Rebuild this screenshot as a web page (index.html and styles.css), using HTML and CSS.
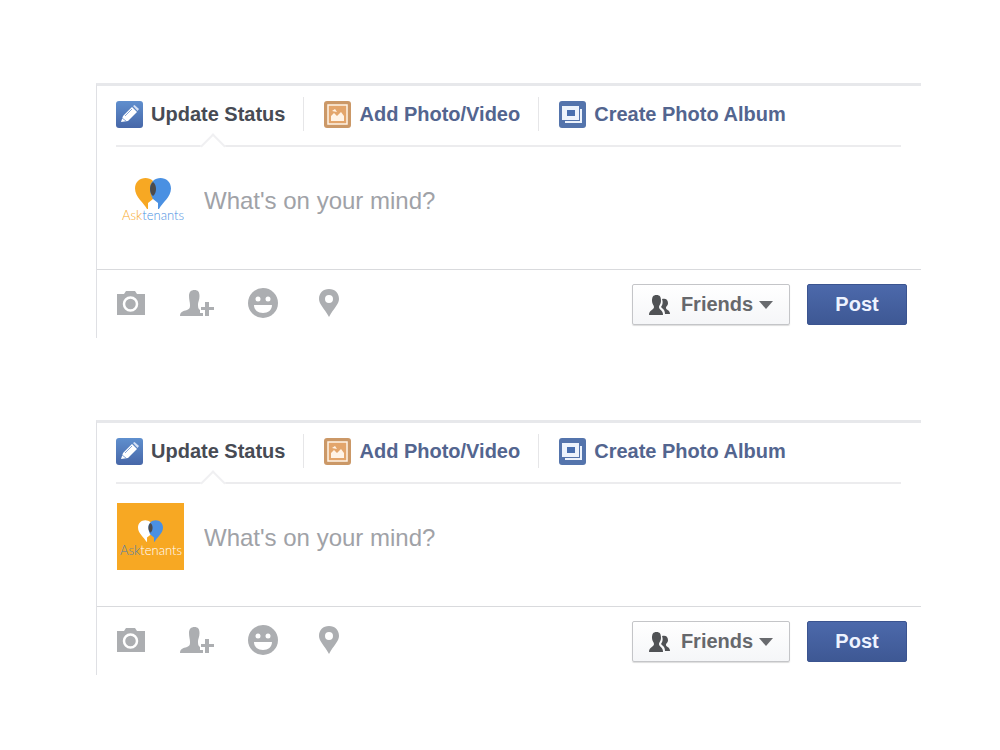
FILE: index.html
```
<!DOCTYPE html>
<html lang="en">
    <head>
        <meta charset="UTF-8" />
        <meta name="viewport" content="width=device-width, initial-scale=1.0" />
        <title>Update Status</title>
        <link rel="stylesheet" href="styles.css">
    </head>
    <body>
        <!-- shared icons -->
        <svg class="sprite" width="0" height="0" aria-hidden="true">
            <defs>
                <linearGradient id="blue" x1="0" y1="0" x2="0" y2="1">
                    <stop offset="0" stop-color="#5f8fce" />
                    <stop offset="1" stop-color="#4767a8" />
                </linearGradient>
            </defs>
            <symbol id="pencil" viewBox="0 0 27 27">
                <rect width="27" height="27" rx="3" fill="url(#blue)" />
                <path d="M5 21l2-6 9-9 5 5-9 9z" fill="#fff" />
                <path d="M17 5l1.500-1 4.500 4-1.500 2z" fill="#d5e1f5" />
                <path d="M6 17l4 3M9 15l7-7" stroke="#86a6d8" stroke-width="1" fill="none" />
            </symbol>
            <symbol id="photo" viewBox="0 0 27 27">
                <rect width="27" height="27" rx="3" fill="#cb9867" />
                <rect x="4" y="4" width="19" height="19" fill="#e3a56b" stroke="#fff3e6" stroke-width="1.500" />
                <path d="M7 20v-5l3-3 3 3 4-4 3 4v5z" fill="#fff3e6" />
                <path d="M8 10l3-2 2 3z" fill="#fff3e6" />
            </symbol>
            <symbol id="album" viewBox="0 0 27 27">
                <rect width="27" height="27" rx="3" fill="#5474ac" />
                <path d="M3 5h17v14H3zM21 8h2v14H6v-2h15z" fill="#edf3fc" />
                <rect x="8" y="9" width="8" height="6" fill="#496faf" />
            </symbol>
            <symbol id="camera" viewBox="0 0 30 26">
                <path d="M1 4h7l2-3h9l2 3h8v21H1z" />
                <circle cx="14.500" cy="14" r="6.500" fill="none" stroke="#fff" stroke-width="2.500" />
            </symbol>
            <symbol id="tag" viewBox="0 0 34 27">
                <path d="M9 6c0-4 2-6 5.500-6s5 2 5 6c0 4-1.500 6-1.500 8 0 3 0 5 2 6v3h3v3H0c0-4 3-5 7-6 3-1 3-3 3-5 0-3-1-5-1-9z" />
                <path d="M25 12h4v5h5v3h-5v6h-4v-6h-4v-3h4z" />
            </symbol>
            <symbol id="smile" viewBox="0 0 30 30">
                <circle cx="15" cy="15" r="15" />
                <circle cx="10" cy="11" r="2.500" fill="#fff" />
                <circle cx="20" cy="11" r="2.500" fill="#fff" />
                <path d="M6 17h18c0 5-4 8-9 8s-9-3-9-8z" fill="#fff" />
            </symbol>
            <symbol id="pin" viewBox="0 0 20 28">
                <path fill-rule="evenodd" d="M10 0c6 0 10 4 10 10 0 5-5 9-10 18C5 19 0 15 0 10 0 4 4 0 10 0zm0 6a4 4 0 1 0 0 8 4 4 0 0 0 0-8z" />
            </symbol>
            <symbol id="friends" viewBox="0 0 21 20">
                <path d="M3 6c0-4 1-6 4.500-6S12 2 12 6c0 3-2 4-2 6 0 3 4 3 4 8H0c0-5 5-5 5-8 0-2-2-3-2-6z" />
                <path d="M13 4c3-1 6 0 6 4 0 3-2 3-2 5s4 2 4 6h-5c0-4-2-5-4-7 2-3 2-5 1-8z" />
            </symbol>
            <symbol id="balloons" viewBox="0 0 36 31">
                <path class="left" d="M10.500 0C16 0 21 4 21 10c0 4-1 8-3 11l-5 4v6h-1C9 25 0 19 0 10.500 0 4 5 0 10.500 0z" />
                <path class="right" d="M25.500 0C31 0 36 4 36 10.500 36 19 27 25 24 31h-1v-6l-5-4c-2-3-3-7-3-11C15 4 20 0 25.500 0z" />
                <path d="M18 4c4 3 4 11 0 14-4-3-4-11 0-14z" fill="#4d4b4b" />
            </symbol>
        </svg>

        <main class="page">
            <form class="composer">
                <nav class="tabs">
                    <a class="tab active" href="#status"><svg><use href="#pencil" /></svg>Update Status</a>
                    <a class="tab" href="#photo-video"><svg><use href="#photo" /></svg>Add Photo/Video</a>
                    <a class="tab" href="#photo-album"><svg><use href="#album" /></svg>Create Photo Album</a>
                </nav>
                <div class="message">
                    <div class="avatar">
                        <svg viewBox="0 0 67 67">
                            <use href="#balloons" x="18" y="12" width="36" height="31" />
                            <text x="36" y="54" text-anchor="middle"><tspan class="ask">Ask</tspan><tspan class="tenants">tenants</tspan></text>
                        </svg>
                    </div>
                    <textarea rows="1" placeholder="What's on your mind?" aria-label="What's on your mind?"></textarea>
                </div>
                <div class="actions">
                    <div class="tools">
                        <button type="button" aria-label="Add photo"><svg width="30" height="26"><use href="#camera" /></svg></button>
                        <button type="button" aria-label="Tag people"><svg width="34" height="27"><use href="#tag" /></svg></button>
                        <button type="button" aria-label="Add feeling"><svg width="30" height="30"><use href="#smile" /></svg></button>
                        <button type="button" aria-label="Add location"><svg width="20" height="28"><use href="#pin" /></svg></button>
                    </div>
                    <button class="btn audience" type="button"><svg width="21" height="20"><use href="#friends" /></svg>Friends<span class="arrow"></span></button>
                    <button class="btn post" type="submit">Post</button>
                </div>
            </form>

            <form class="composer">
                <nav class="tabs">
                    <a class="tab active" href="#status"><svg><use href="#pencil" /></svg>Update Status</a>
                    <a class="tab" href="#photo-video"><svg><use href="#photo" /></svg>Add Photo/Video</a>
                    <a class="tab" href="#photo-album"><svg><use href="#album" /></svg>Create Photo Album</a>
                </nav>
                <div class="message">
                    <div class="avatar filled">
                        <svg viewBox="0 0 67 67">
                            <use href="#balloons" x="21" y="17" width="25" height="22" />
                            <text x="34" y="52" text-anchor="middle"><tspan class="ask">Ask</tspan><tspan class="tenants">tenants</tspan></text>
                        </svg>
                    </div>
                    <textarea rows="1" placeholder="What's on your mind?" aria-label="What's on your mind?"></textarea>
                </div>
                <div class="actions">
                    <div class="tools">
                        <button type="button" aria-label="Add photo"><svg width="30" height="26"><use href="#camera" /></svg></button>
                        <button type="button" aria-label="Tag people"><svg width="34" height="27"><use href="#tag" /></svg></button>
                        <button type="button" aria-label="Add feeling"><svg width="30" height="30"><use href="#smile" /></svg></button>
                        <button type="button" aria-label="Add location"><svg width="20" height="28"><use href="#pin" /></svg></button>
                    </div>
                    <button class="btn audience" type="button"><svg width="21" height="20"><use href="#friends" /></svg>Friends<span class="arrow"></span></button>
                    <button class="btn post" type="submit">Post</button>
                </div>
            </form>
        </main>
    </body>
</html>
```
FILE: styles.css
```
* {
    box-sizing: border-box;
}
body {
    margin: 0;
    background: #fff;
    font-family: "Liberation Sans", Arial, sans-serif;
}
.sprite {
    position: absolute;
}
.page {
    display: flex;
    flex-direction: column;
    gap: 82px;
    padding: 83px 79px 40px 96px;
}
.composer {
    border-top: 3px solid #e7e8eb;
    border-left: 1px solid #dfe0e4;
}

/* tabs */
.tabs {
    display: flex;
    align-items: center;
    height: 61px;
    margin: 0 20px 0 19px;
    padding-bottom: 3px;
    border-bottom: 2px solid #ececee;
}
.tab {
    display: flex;
    align-items: center;
    gap: 8px;
    height: 34px;
    padding: 0 18px 0 20px;
    border-left: 1px solid #e6e6e8;
    color: #53658f;
    font-size: 20px;
    font-weight: 700;
    white-space: nowrap;
    text-decoration: none;
}
.tab svg {
    width: 27px;
    height: 27px;
}
.tab.active {
    position: relative;
    padding-left: 0;
    border-left: 0;
    color: #474b54;
}
/* notch under the active tab */
.tab.active::after {
    content: "";
    position: absolute;
    left: 88px;
    bottom: -24px;
    width: 16px;
    height: 16px;
    border: 2px solid #f0f0f2;
    border-right: 0;
    border-bottom: 0;
    background: #fff;
    transform: rotate(45deg);
}

/* message */
.message {
    display: flex;
    align-items: flex-start;
    gap: 20px;
    padding: 19px 20px 36px;
}
.avatar {
    --left: #f7a823;
    --right: #4a90e2;
    flex: none;
    width: 67px;
    height: 67px;
}
.avatar svg {
    display: block;
    overflow: visible;
}
.avatar text {
    font-family: Lato, sans-serif;
    font-size: 13px;
    font-weight: 300;
}
.left {
    fill: var(--left);
}
.right {
    fill: var(--right);
}
.ask {
    fill: #f7a823;
}
.tenants {
    fill: #4a90e2;
}
.avatar.filled {
    --left: #fff;
    background: #f7a823;
}
.filled .ask {
    fill: #4f7fae;
}
.filled .tenants {
    fill: #fff;
}
.message textarea {
    flex: 1;
    height: 67px;
    padding: 21px 0 18px;
    border: 0;
    outline: 0;
    resize: none;
    overflow: hidden;
    background: none;
    font-family: inherit;
    font-size: 24px;
    line-height: 28px;
}
.message textarea::placeholder {
    color: #a0a2a7;
}

/* actions */
.actions {
    display: flex;
    align-items: center;
    gap: 17px;
    padding: 14px 14px 13px 19px;
    border-top: 1px solid #d9dadd;
}
.tools {
    display: flex;
    align-items: center;
    gap: 36px;
    margin-right: auto;
}
.tools button {
    display: flex;
    justify-content: center;
    width: 30px;
    padding: 0 0 3px;
    border: 0;
    background: none;
    fill: #acaeb1;
}
.tools svg {
    flex: none;
}
.btn {
    display: flex;
    align-items: center;
    justify-content: center;
    height: 41px;
    border-radius: 2px;
    font-family: inherit;
    font-size: 20px;
    font-weight: 700;
}
.audience {
    width: 158px;
    gap: 11px;
    border: 1px solid #c4c5c8;
    background: linear-gradient(#fff, #f5f6f8);
    box-shadow: 0 1px 1px #ddd;
    color: #66686c;
    fill: #505255;
}
.arrow {
    margin-left: -5px;
    border: 7px solid transparent;
    border-top: 8px solid #686a6e;
    border-bottom: 0;
}
.post {
    width: 100px;
    border: 1px solid #3b5490;
    background: linear-gradient(#4c69ab, #3e5894);
    color: #eef3ff;
}
```
